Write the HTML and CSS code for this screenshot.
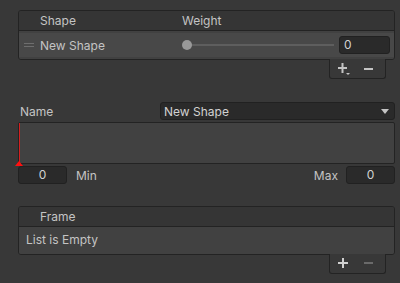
FILE: index.html
```html
<!DOCTYPE html>
<html lang="en">
<head>
    <meta charset="UTF-8">
    <title>Shape Inspector</title>
    <link rel="stylesheet" href="styles.css">
</head>
<body>
    <div class="inspector">
        <!-- Shapes list -->
        <div class="list">
            <div class="list-box">
                <div class="list-header">
                    <span class="col-name">Shape</span>
                    <span class="col-weight">Weight</span>
                </div>
                <div class="list-body">
                    <div class="list-row">
                        <span class="handle"></span>
                        <span class="col-name">New Shape</span>
                        <div class="slider">
                            <div class="slider-track"></div>
                            <div class="slider-knob"></div>
                        </div>
                        <div class="int-field">0</div>
                    </div>
                </div>
            </div>
            <div class="list-footer">
                <svg class="icon" width="14" height="14" viewBox="0 0 14 14">
                    <rect x="1" y="5" width="9" height="2" fill="#c4c4c4"/>
                    <rect x="4.5" y="1" width="2" height="10" fill="#c4c4c4"/>
                    <path d="M9 11 L13 11 L11 13 Z" fill="#c4c4c4"/>
                </svg>
                <svg class="icon" width="14" height="14" viewBox="0 0 14 14">
                    <rect x="2" y="6" width="9" height="2" fill="#c4c4c4"/>
                </svg>
            </div>
        </div>

        <!-- Name and curve -->
        <div class="field-row name-row">
            <span class="label">Name</span>
            <div class="dropdown">
                <span>New Shape</span>
                <svg width="8" height="5" viewBox="0 0 8 5">
                    <path d="M0 0 L8 0 L4 5 Z" fill="#c4c4c4"/>
                </svg>
            </div>
        </div>
        <div class="curve">
            <div class="curve-marker"></div>
        </div>
        <div class="field-row range-row">
            <div class="num-field">0</div>
            <span class="label">Min</span>
            <span class="spacer"></span>
            <span class="label">Max</span>
            <div class="num-field">0</div>
        </div>

        <!-- Frames list -->
        <div class="list frame-list">
            <div class="list-box">
                <div class="list-header">
                    <span class="col-name">Frame</span>
                </div>
                <div class="list-empty">List is Empty</div>
            </div>
            <div class="list-footer">
                <svg class="icon" width="14" height="14" viewBox="0 0 14 14">
                    <rect x="1" y="5" width="10" height="2" fill="#d0d0d0"/>
                    <rect x="5" y="1" width="2" height="10" fill="#d0d0d0"/>
                </svg>
                <svg class="icon" width="14" height="14" viewBox="0 0 14 14">
                    <rect x="2" y="5" width="9" height="2" fill="#6a6a6a"/>
                </svg>
            </div>
        </div>
    </div>
</body>
</html>
```

FILE: styles.css
```css
* {
    margin: 0;
    padding: 0;
    box-sizing: border-box;
}

body {
    background-color: #383838;
    color: #c4c4c4;
    font-family: Inter, 'Noto Sans', sans-serif;
    font-size: 12px;
    width: 400px;
    height: 283px;
    overflow: hidden;
}

.inspector {
    padding: 10px 5px 0 18px;
}

/* Reorderable list */
.list-box {
    border: 1px solid #232323;
    border-radius: 3px;
    overflow: hidden;
}

.list-header {
    height: 20px;
    display: flex;
    align-items: center;
    background-color: #353535;
    border-bottom: 1px solid #232323;
}

.list-header .col-name {
    margin-left: 21px;
    width: 142px;
}

.list-body {
    background-color: #414141;
    padding: 2px 0 2px;
}

.list-row {
    height: 24px;
    display: flex;
    align-items: center;
    background-color: #484848;
}

.handle {
    width: 10px;
    height: 4px;
    margin-left: 5px;
    margin-right: 6px;
    border-top: 1px solid #6e6e6e;
    border-bottom: 1px solid #6e6e6e;
}

.list-row .col-name {
    width: 142px;
}

.slider {
    position: relative;
    width: 152px;
    height: 12px;
    margin-right: 5px;
    display: flex;
    align-items: center;
}

.slider-track {
    width: 100%;
    height: 2px;
    margin-left: 5px;
    background-color: #5e5e5e;
}

.slider-knob {
    position: absolute;
    left: 0;
    top: 1px;
    width: 10px;
    height: 10px;
    border-radius: 50%;
    background-color: #999999;
}

.int-field {
    width: 51px;
    height: 18px;
    padding-left: 4px;
    line-height: 16px;
    background-color: #2a2a2a;
    border: 1px solid #212121;
    border-radius: 3px;
    color: #d2d2d2;
}

.list-footer {
    width: 57px;
    height: 20px;
    margin-left: auto;
    margin-right: 9px;
    margin-top: -1px;
    display: flex;
    align-items: center;
    gap: 11px;
    padding-left: 7px;
    background-color: #383838;
    border: 1px solid #232323;
    border-top: none;
    border-radius: 0 0 3px 3px;
}

.list-empty {
    height: 27px;
    padding-left: 7px;
    line-height: 26px;
    background-color: #414141;
}

/* Fields */
.field-row {
    display: flex;
    align-items: center;
}

.name-row {
    margin-top: 23px;
    height: 18px;
}

.label {
    padding-left: 2px;
}

.name-row .label {
    width: 142px;
}

.dropdown {
    flex: 1;
    height: 18px;
    display: flex;
    align-items: center;
    justify-content: space-between;
    padding: 0 5px 0 3px;
    background-color: #2a2a2a;
    border: 1px solid #212121;
    border-radius: 3px;
    color: #d2d2d2;
}

.curve {
    position: relative;
    margin-top: 2px;
    height: 42px;
    background-color: #414141;
    border: 1px solid #232323;
    border-radius: 2px;
}

.curve-marker {
    position: absolute;
    left: 0;
    top: 0;
    bottom: 0;
    width: 1px;
    background-color: #d42020;
}

.curve-marker::after {
    content: '';
    position: absolute;
    left: -4px;
    bottom: -3px;
    border-left: 4.5px solid transparent;
    border-right: 4.5px solid transparent;
    border-bottom: 5px solid #ff1010;
}

.range-row {
    margin-top: 2px;
    height: 18px;
}

.range-row .label {
    padding-left: 9px;
}

.range-row .label:nth-of-type(3) {
    padding-left: 0;
    padding-right: 8px;
}

.spacer {
    flex: 1;
}

.num-field {
    width: 49px;
    height: 18px;
    text-align: center;
    line-height: 16px;
    background-color: #2a2a2a;
    border: 1px solid #212121;
    border-radius: 3px;
    color: #d2d2d2;
}

.frame-list {
    margin-top: 22px;
}
```
